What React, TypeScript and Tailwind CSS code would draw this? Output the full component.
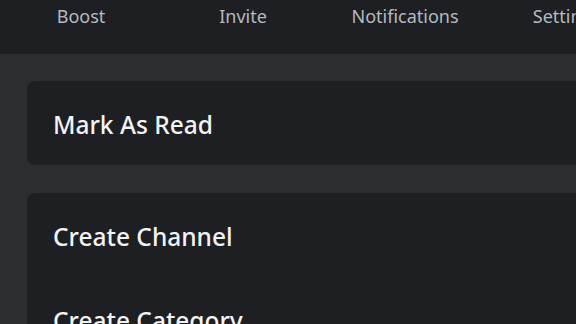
import React from "react";

export default function App() {
  const nav = ["Boost", "Invite", "Notifications", "Settings"];
  return (
    <div className="w-[576px] h-[324px] overflow-hidden bg-[#2b2d31] flex flex-col" style={{ fontFamily: '"Noto Sans", sans-serif' }}>
      <div className="h-[54px] shrink-0 bg-[#1e1f22] flex items-start">
        {nav.map((n) => (
          <div key={n} className="w-[162px] shrink-0 text-center text-[18px] leading-[32px] text-[#b5bac1]">
            {n}
          </div>
        ))}
      </div>
      <div className="flex flex-col gap-[28px] pt-[27px] pl-[27px]">
        <div className="bg-[#1e1f22] rounded-l-[8px] h-[84px] flex items-center pl-[26px] pt-[5px]">
          <span className="text-[24.5px] font-medium text-[#f2f3f5]">Mark As Read</span>
        </div>
        <div className="bg-[#1e1f22] rounded-l-[8px] flex flex-col">
          <div className="h-[84px] flex items-center pl-[26px] pt-[5px]">
            <span className="text-[24.5px] font-medium text-[#f2f3f5]">Create Channel</span>
          </div>
          <div className="h-[84px] flex items-center pl-[26px] pt-[5px]">
            <span className="text-[24.5px] font-medium text-[#f2f3f5]">Create Category</span>
          </div>
        </div>
      </div>
    </div>
  );
}
